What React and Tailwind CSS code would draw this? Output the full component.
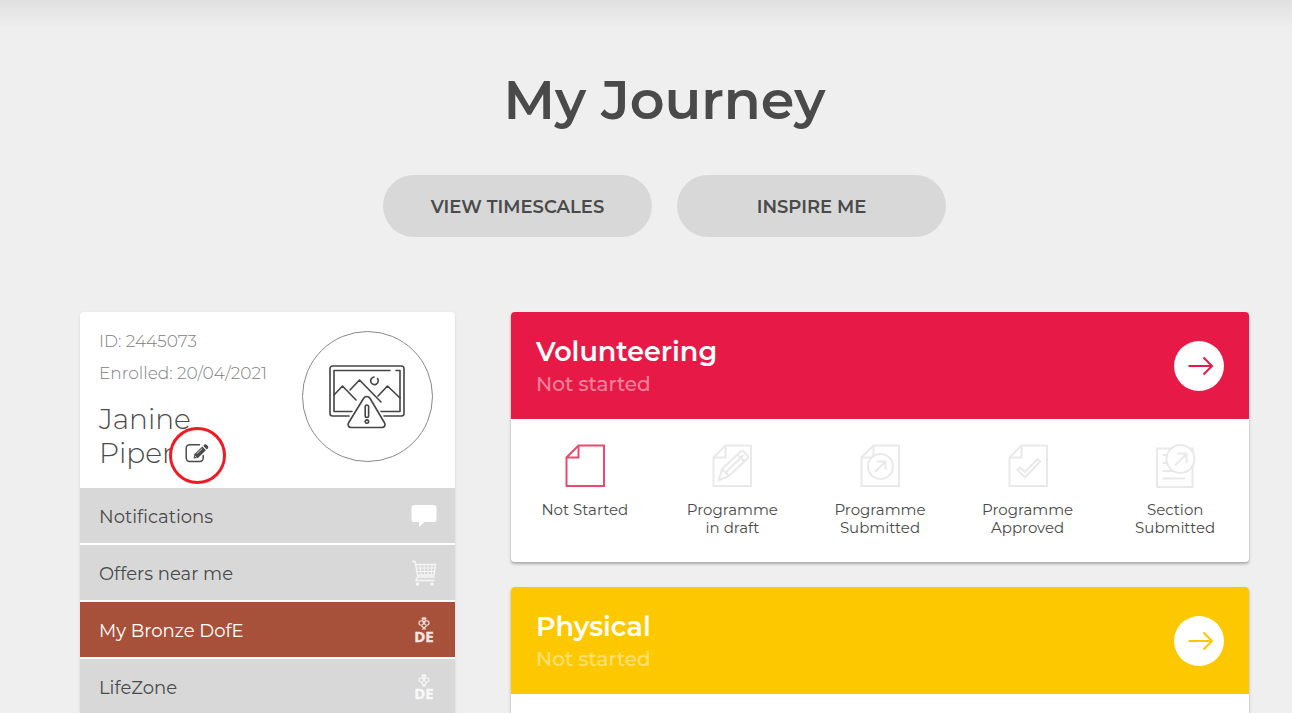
import React from "react";

function EditIcon() {
  return (
    <svg viewBox="0 0 24 20" className="h-5 w-6" fill="none" stroke="#4a4a4a" aria-hidden="true">
      <path d="M14.500 1.800H4.600A3.400 3.400 0 0 0 1.200 5.200V15a3.400 3.400 0 0 0 3.400 3.400h10.200a3.400 3.400 0 0 0 3.400-3.400v-2.600" strokeWidth="1.500" strokeLinecap="round" />
      <path d="M8.600 15.600l.7-4.400 8-7.600 3.600 3.700-8 7.600z" fill="#4a4a4a" stroke="none" />
      <path d="M18.200 2.800l1-1c.8-.8 1.700-.8 2.400 0l1.200 1.200c.7.7.7 1.600 0 2.400l-1 1z" fill="#4a4a4a" stroke="none" />
      <path d="M11.700 10.800l5.400-5.200M9.700 12.800l1.900 1.800" stroke="#fff" strokeWidth=".8" />
    </svg>
  );
}

function MissingPictureIcon() {
  return (
    <svg viewBox="0 0 76 64" className="h-16 w-[76px]" fill="none" stroke="#444" strokeWidth="1.600" strokeLinecap="round" strokeLinejoin="round" aria-hidden="true">
      <path d="M20 51H3.500A2.500 2.500 0 0 1 1 48.500v-45A2.500 2.500 0 0 1 3.500 1h69A2.500 2.500 0 0 1 75 3.500v45a2.500 2.500 0 0 1-2.500 2.500H55" />
      <path d="M23 46.500H5V5.500h56M67 5.500h4v41H52" />
      <path d="M5 30l8.500-9L27 35M21 25l9.500-10L52 37M49 31l9.500-10L71 33" />
      <path d="M45 12a3.800 3.800 0 1 0 3.500 1.500" />
      <path d="M34.500 33.500c1.600-2.700 5-2.700 6.600 0l14.500 24.500c1.200 2-.1 4.500-2.500 4.500h-31c-2.400 0-3.800-2.500-2.600-4.500z" fill="#fff" />
      <rect x="36.200" y="40" width="3.400" height="12.500" rx="1.700" />
      <circle cx="37.900" cy="56.600" r="1.700" />
    </svg>
  );
}

function ChatIcon() {
  return (
    <svg viewBox="0 0 26 24" className="h-6 w-[26px]" fill="#fff" aria-hidden="true">
      <path d="M3 1h20a2.500 2.500 0 0 1 2.500 2.500v12a2.500 2.500 0 0 1-2.500 2.500H13.500L8 23v-5H3A2.500 2.500 0 0 1 .5 15.500v-12A2.500 2.500 0 0 1 3 1z" />
    </svg>
  );
}

function CartIcon() {
  return (
    <svg viewBox="0 0 26 26" className="size-[26px]" fill="none" stroke="#f5f5f5" aria-hidden="true">
      <path d="M1 1.500h3l3 15.500h16.500M5 4.500h19.500l-1.500 10.500H6.500M6.500 17l-1.500 3.500h18.500" strokeWidth="1.400" />
      <path d="M5.500 8h18.500M6 11.500h17.500M9 4.500l1 10.500M13 4.500l.5 10.500M17 4.500v10.500M21 4.500l-.8 10.500" strokeWidth="1" />
      <circle cx="6.500" cy="24" r="1.700" fill="#f5f5f5" stroke="none" />
      <circle cx="21" cy="24" r="1.700" fill="#f5f5f5" stroke="none" />
    </svg>
  );
}

function DofeIcon() {
  return (
    <svg viewBox="0 0 26 38" className="h-[38px] w-[26px] opacity-85" fill="none" stroke="#fff" aria-hidden="true">
      <ellipse cx="13" cy="7.500" rx="2.600" ry="1.300" fill="#fff" stroke="none" />
      <circle cx="10.200" cy="12" r="2.200" strokeWidth="1.100" />
      <circle cx="15.800" cy="12" r="2.200" strokeWidth="1.100" />
      <path d="M11 8.500l2 2.500 2-2.500M10.500 15l2.500 2 2.500-2M11 18h4" strokeWidth="1.100" />
      <text x="13" y="31" textAnchor="middle" fontFamily="Open Sans, sans-serif" fontWeight="700" fontSize="15" fill="#fff" stroke="#fff" strokeWidth=".4">DE</text>
    </svg>
  );
}

function ArrowIcon() {
  return (
    <svg viewBox="0 0 26 20" className="ml-1 h-5 w-[26px]" fill="none" stroke="currentColor" strokeWidth="2" aria-hidden="true">
      <path d="M.5 10h23M15.500 1.500L24 10l-8.500 8.500" />
    </svg>
  );
}

const Sheet = () => <path d="M13.500 1.500H39v40.500H1.500V13.500zM13.500 1.500v12H1.500" />;

const stepIcons = {
  blank: <Sheet />,
  draft: (
    <>
      <Sheet />
      <path d="M6.500 36.500L10 25 28.500 7.500q1.500-1.500 3 0l4 4q1.500 1.500 0 3L17 32zM10 25l7 7M13.500 28.500L31.500 11M25.500 10.500l7 7" />
    </>
  ),
  submitted: (
    <>
      <Sheet />
      <circle cx="20.500" cy="22.500" r="12.500" fill="#fff" />
      <path d="M15 28l10-10M17 17.500h8.500V26" />
    </>
  ),
  approved: (
    <>
      <Sheet />
      <path d="M9.500 26l2.500-2.500 5 4.500L29.500 15l2.500 2.500L17 33.500z" />
    </>
  ),
  section: (
    <>
      <path d="M2 4.500h35.500V43H2z" />
      <path d="M7.500 11h8M7.500 19h8M7.500 27h12M7.500 34.500h22.500" />
      <circle cx="25.500" cy="15" r="14" fill="#fff" />
      <path d="M20 21.500L31.500 10M22 9.500h9.500V19" />
    </>
  ),
};

const steps = [
  { icon: "blank", lines: ["Not Started"], active: true },
  { icon: "draft", lines: ["Programme", "in draft"] },
  { icon: "submitted", lines: ["Programme", "Submitted"] },
  { icon: "approved", lines: ["Programme", "Approved"] },
  { icon: "section", lines: ["Section", "Submitted"] },
];

const menu = [
  { label: "Notifications", icon: <ChatIcon /> },
  { label: "Offers near me", icon: <CartIcon /> },
  { label: "My Bronze DofE", icon: <DofeIcon />, active: true },
  { label: "LifeZone", icon: <DofeIcon /> },
];

function SectionHeader({ title, className }) {
  return (
    <header className={"flex h-[107px] shrink-0 items-center justify-between rounded-t px-[25px] " + className}>
      <div className="pt-1 text-white">
        <h2 className="text-[27px] leading-8 font-semibold">{title}</h2>
        <p className="text-xl leading-8 font-medium opacity-45">Not started</p>
      </div>
      <button type="button" aria-label={"Open " + title} className="flex size-[50px] items-center justify-center rounded-full bg-white">
        <ArrowIcon />
      </button>
    </header>
  );
}

export default function App() {
  return (
    <div className="flex h-screen flex-col overflow-hidden bg-[#efefef] pr-[43px] pl-20 font-[Montserrat,Inter,sans-serif] text-[#4a4a4a]">
      <div className="-mr-[43px] -ml-20 h-7 shrink-0 bg-linear-to-b from-[#e0e0e0] to-[#efefef]" />
      <h1 className="mt-9 text-center text-[54px] leading-[72px] font-semibold">My Journey</h1>
      <div className="mt-[39px] flex justify-center gap-[25px]">
        <button type="button" className="h-[62px] w-[269px] rounded-full bg-[#d8d8d8] pt-0.5 text-lg font-semibold">VIEW TIMESCALES</button>
        <button type="button" className="h-[62px] w-[269px] rounded-full bg-[#d8d8d8] pt-0.5 text-lg font-semibold">INSPIRE ME</button>
      </div>
      <div className="mt-[75px] flex min-h-0 flex-1 gap-14">
        <aside className="w-[375px] shrink-0">
          <div className="rounded-t bg-white shadow-sm">
            <div className="flex h-[176px] justify-between pt-[13px] pr-[22px] pl-[19px]">
              <div>
                <p className="text-[17px] leading-8 font-light text-[#808080]">ID: 2445073</p>
                <p className="text-[17px] leading-8 font-light text-[#808080]">Enrolled: 20/04/2021</p>
                <h2 className="mt-[13px] text-[28px] leading-[34px] font-light">
                  Janine
                  <br />
                  <span className="flex items-center gap-3">
                    Piper
                    <button type="button" aria-label="Edit name" className="relative">
                      <EditIcon />
                      <span className="absolute -top-4 -left-4 size-[57px] rounded-full border-3 border-[#ec1c24]" />
                    </button>
                  </span>
                </h2>
              </div>
              <div className="mt-1.5 flex size-[131px] items-center justify-center rounded-full border border-[#888] pr-0.5">
                <MissingPictureIcon />
              </div>
            </div>
            <nav className="flex flex-col gap-0.5">
              {menu.map((m) => (
                <a
                  key={m.label}
                  href="#"
                  className={
                    "flex h-[55px] items-center justify-between pr-[18px] pl-[19px] text-lg " +
                    (m.active ? "bg-[#a8513a] text-white" : "bg-[#d8d8d8]")
                  }
                >
                  <span className="pt-0.5">{m.label}</span>
                  {m.icon}
                </a>
              ))}
            </nav>
          </div>
        </aside>
        <main className="flex min-w-0 flex-1 flex-col gap-[25px]">
          <section className="rounded bg-white shadow-[0_2px_3px_rgba(0,0,0,0.3)]">
            <SectionHeader title="Volunteering" className="bg-[#e71946] text-[#e71946]" />
            <ol className="grid h-[143px] grid-cols-5 pt-[25px]">
              {steps.map((s) => (
                <li key={s.icon} className="flex flex-col items-center text-center text-[15px] leading-[18px]">
                  <svg viewBox="-1 0 42 45" className={"mb-3 h-[45px] w-[42px] " + (s.active ? "text-[#e94a6d]" : "text-[#e9e9e9]")} fill="none" stroke="currentColor" strokeWidth="2" aria-hidden="true">
                    {stepIcons[s.icon]}
                  </svg>
                  {s.lines.map((l) => (
                    <span key={l}>{l}</span>
                  ))}
                </li>
              ))}
            </ol>
          </section>
          <section className="flex-1 rounded-t bg-white shadow-[0_2px_3px_rgba(0,0,0,0.3)]">
            <SectionHeader title="Physical" className="bg-[#fec800] text-[#fec800]" />
          </section>
        </main>
      </div>
    </div>
  );
}
